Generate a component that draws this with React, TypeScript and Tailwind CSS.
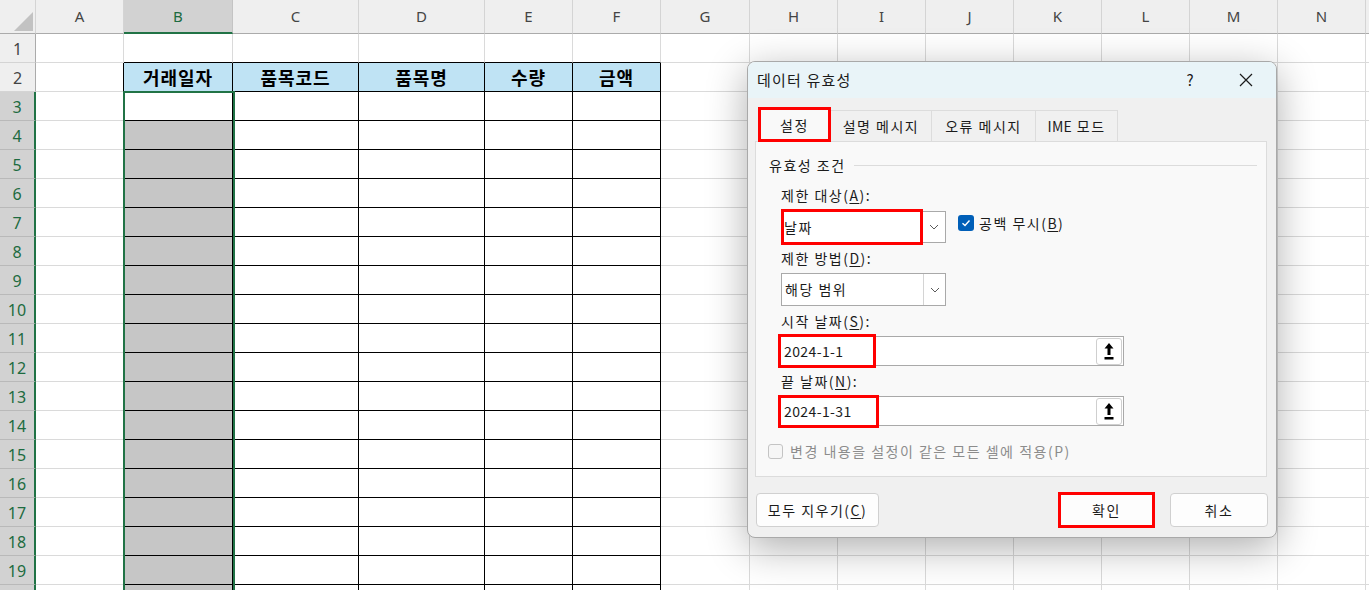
import React from 'react';

type Col = { key: string; w: string };

const COLS: Col[] = [
  { key: 'A', w: 'w-[88px]' },
  { key: 'B', w: 'w-[109px]' },
  { key: 'C', w: 'w-[126px]' },
  { key: 'D', w: 'w-[126px]' },
  { key: 'E', w: 'w-[88px]' },
  { key: 'F', w: 'w-[88px]' },
  { key: 'G', w: 'w-[89px]' },
  { key: 'H', w: 'w-[88px]' },
  { key: 'I', w: 'w-[88px]' },
  { key: 'J', w: 'w-[88px]' },
  { key: 'K', w: 'w-[88px]' },
  { key: 'L', w: 'w-[88px]' },
  { key: 'M', w: 'w-[88px]' },
  { key: 'N', w: 'w-[88px]' },
  { key: '', w: 'w-[88px]' },
];

const HEADERS: Record<number, string> = {
  1: '거래일자',
  2: '품목코드',
  3: '품목명',
  4: '수량',
  5: '금액',
};

const ROWS = Array.from({ length: 20 }, (_, i) => i + 1);

function cellClass(row: number, col: number) {
  const inTable = col >= 1 && col <= 5 && row >= 2;
  let borders = 'border-r-[#dadada] border-b-[#dadada]';
  if (inTable) borders = 'border-r-black border-b-black';
  else if (col === 0 && row >= 2) borders = 'border-r-black border-b-[#dadada]';
  else if (row === 1 && col >= 1 && col <= 5) borders = 'border-r-[#dadada] border-b-black';

  let bg = 'bg-white';
  if (inTable && row === 2) bg = 'bg-[#bfe3f4]';
  else if (col === 1 && row >= 4) bg = 'bg-[#c6c6c6]';
  return `${borders} ${bg}`;
}

function Chevron() {
  return (
    <svg width="10" height="6" viewBox="0 0 10 6" fill="none">
      <path d="M1 1 L5 5 L9 1" stroke="#5a5a5a" strokeWidth="1" />
    </svg>
  );
}

function UploadArrow() {
  return (
    <svg width="10" height="17" viewBox="0 0 10 17">
      <polygon points="5,0 9.5,5.5 6.5,5.5 6.5,12 3.5,12 3.5,5.5 0.5,5.5" fill="#000" />
      <rect x="0.5" y="14" width="9" height="2.5" fill="#000" />
    </svg>
  );
}

function Mn({ c }: { c: string }) {
  return <span className="underline underline-offset-2">{c}</span>;
}

function Sheet() {
  return (
    <div className="flex flex-col">
      {/* column headers */}
      <div className="flex h-[34px]">
        <div className="flex h-[34px] w-[36px] shrink-0 items-end justify-end border-r border-b border-r-[#d4d4d4] border-b-[#ababab] bg-[#efefef] pb-[2px] pr-[2px]">
          <svg width="19" height="19" viewBox="0 0 19 19">
            <polygon points="19,0 19,19 0,19" fill="#c2c2c2" />
          </svg>
        </div>
        {COLS.map((c, i) =>
          c.key === 'B' ? (
            <div
              key={i}
              className={`${c.w} flex h-[34px] shrink-0 items-center justify-center border-r border-b-2 border-r-[#c4c4c4] border-b-[#217346] bg-[#d2d2d2] text-[15px] text-[#1d6b40]`}
            >
              {c.key}
            </div>
          ) : (
            <div
              key={i}
              className={`${c.w} flex h-[34px] shrink-0 items-center justify-center border-r border-b border-r-[#d4d4d4] border-b-[#ababab] bg-[#efefef] text-[15px] text-[#444]`}
            >
              {c.key}
            </div>
          )
        )}
      </div>

      {ROWS.map((r) => (
        <div key={r} className="flex h-[29px]">
          {r >= 3 ? (
            <div className="flex h-[29px] w-[36px] shrink-0 items-center justify-center border-r-2 border-b border-r-[#217346] border-b-[#b9b9b9] bg-[#d2d2d2] pt-[2px] text-[16px] text-[#1d6b40]">
              {r < 20 ? r : null}
            </div>
          ) : (
            <div className="flex h-[29px] w-[36px] shrink-0 items-center justify-center border-r border-b border-r-[#ababab] border-b-[#d4d4d4] bg-[#efefef] pt-[2px] text-[16px] text-[#444]">
              {r}
            </div>
          )}
          {COLS.map((c, ci) => (
            <div
              key={ci}
              className={`${c.w} flex h-[29px] shrink-0 items-center justify-center border-r border-b ${cellClass(r, ci)}`}
            >
              {r === 2 && HEADERS[ci] ? (
                <span className="font-['Noto_Sans_CJK_KR',sans-serif] text-[18px] font-bold tracking-[1px] text-black">
                  {HEADERS[ci]}
                </span>
              ) : null}
            </div>
          ))}
        </div>
      ))}
    </div>
  );
}

function Dialog() {
  return (
    <div className="absolute left-[747px] top-[61px] h-[477px] w-[530px] overflow-hidden rounded-[8px] border border-[#a9a9a9] bg-[#f0f0f0] font-['Noto_Sans_CJK_KR',sans-serif] text-[14px] tracking-[1.5px] text-[#1b1b1b] shadow-[0_10px_40px_rgba(0,0,0,0.32)]">
      {/* title bar */}
      <div className="flex h-[36px] items-center bg-[#e9f4f8] pl-[9px]">
        <span className="text-[15px] tracking-[1.2px]">데이터 유효성</span>
        <div className="ml-auto mr-[7px] flex items-center gap-[10px]">
          <span className="w-[46px] text-center text-[15px] tracking-normal">?</span>
          <span className="flex w-[46px] justify-center">
            <svg width="14" height="14" viewBox="0 0 14 14">
              <path d="M1 1 L13 13 M13 1 L1 13" stroke="#1b1b1b" strokeWidth="1.2" />
            </svg>
          </span>
        </div>
      </div>

      {/* tabs */}
      <div className="ml-[10px] mt-[12px] flex h-[31px]">
        <div className="relative flex h-[31px] w-[73px] items-center justify-center bg-[#f9f9f9]">
          설정
          <div className="absolute inset-x-0 -top-[3px] h-[35px] border-[3px] border-[#ff0000]" />
        </div>
        <div className="flex h-[31px] w-[101px] items-center justify-center border-t border-r border-[#dcdcdc]">
          설명 메시지
        </div>
        <div className="flex h-[31px] w-[104px] items-center justify-center border-t border-r border-[#dcdcdc]">
          오류 메시지
        </div>
        <div className="flex h-[31px] w-[82px] items-center justify-center border-t border-r border-[#dcdcdc]">
          <span className="tracking-[0.3px]">IME</span>&nbsp;모드
        </div>
      </div>

      {/* panel */}
      <div className="ml-[7px] flex h-[336px] w-[512px] flex-col border border-[#dcdcdc] bg-[#f9f9f9]">
        <div className="mt-[13px] flex h-[20px] items-center pl-[13px]">
          <span>유효성 조건</span>
          <div className="ml-[8px] mr-[9px] h-px flex-1 bg-[#dcdcdc]" />
        </div>

        <div className="mt-[10px] flex h-[20px] items-center pl-[25px]">
          제한 대상(<Mn c="A" />):
        </div>
        <div className="mt-[4px] flex h-[36px] pl-[25px]">
          <div className="flex h-[36px] w-[165px] items-center">
            <div className="flex h-[36px] w-[142px] items-center border-[3px] border-[#ff0000] bg-white">
              날짜
            </div>
            <div className="flex h-[32px] w-[23px] items-center justify-center border border-l-0 border-[#a9a9a9] bg-white">
              <Chevron />
            </div>
          </div>
          <div className="ml-[12px] mt-[6px] flex h-[16px] w-[16px] items-center justify-center rounded-[3px] bg-[#005fb8]">
            <svg width="12" height="12" viewBox="0 0 12 12" fill="none">
              <path d="M2.5 6.2 L5 8.5 L9.5 3.5" stroke="#fff" strokeWidth="1.4" />
            </svg>
          </div>
          <div className="ml-[5px] mt-[4px] flex h-[20px] items-center">
            공백 무시(<Mn c="B" />)
          </div>
        </div>

        <div className="mt-[3px] flex h-[20px] items-center pl-[25px]">
          제한 방법(<Mn c="D" />):
        </div>
        <div className="mt-[5px] flex pl-[25px]">
          <div className="flex h-[33px] w-[165px] border border-[#a9a9a9] bg-white">
            <div className="flex flex-1 items-center pl-[3px]">해당 범위</div>
            <div className="flex w-[22px] items-center justify-center border-l border-[#d4d4d4]">
              <Chevron />
            </div>
          </div>
        </div>

        <div className="mt-[5px] flex h-[20px] items-center pl-[25px]">
          시작 날짜(<Mn c="S" />):
        </div>
        <div className="mt-[5px] flex pl-[22px]">
          <div className="relative flex h-[30px] w-[346px] items-center border border-[#a9a9a9] bg-white pl-[5px]">
            <span className="tracking-[0.4px]">2024-1-1</span>
            <div className="ml-auto mr-[1px] flex h-[27px] w-[26px] items-center justify-center rounded-[3px] border border-[#cfcfcf] bg-white">
              <UploadArrow />
            </div>
            <div className="absolute -left-[1px] -top-[3px] h-[34px] w-[98px] border-[3px] border-[#ff0000]" />
          </div>
        </div>

        <div className="mt-[5px] flex h-[20px] items-center pl-[25px]">
          끝 날짜(<Mn c="N" />):
        </div>
        <div className="mt-[5px] flex pl-[22px]">
          <div className="relative flex h-[30px] w-[346px] items-center border border-[#a9a9a9] bg-white pl-[5px]">
            <span className="tracking-[0.4px]">2024-1-31</span>
            <div className="ml-auto mr-[1px] flex h-[27px] w-[26px] items-center justify-center rounded-[3px] border border-[#cfcfcf] bg-white">
              <UploadArrow />
            </div>
            <div className="absolute -left-[1px] -top-[2px] h-[33px] w-[101px] border-[3px] border-[#ff0000]" />
          </div>
        </div>

        <div className="mt-[15px] flex h-[20px] items-center pl-[12px] text-[#8c8c8c]">
          <div className="h-[15px] w-[15px] rounded-[3px] border border-[#c4c4c4] bg-[#f6f6f6]" />
          <span className="ml-[7px]">변경 내용을 설정이 같은 모든 셀에 적용(P)</span>
        </div>
      </div>

      {/* buttons */}
      <div className="ml-[8px] mr-[8px] mt-[16px] flex">
        <div className="flex h-[34px] w-[123px] items-center justify-center rounded-[4px] border border-[#d0d0d0] bg-[#fdfdfd]">
          모두 지우기(<Mn c="C" />)
        </div>
        <div className="relative ml-auto flex h-[34px] w-[97px] items-center justify-center bg-[#fdfdfd]">
          확인
          <div className="absolute -inset-y-[1px] inset-x-0 border-[3px] border-[#ff0000]" />
        </div>
        <div className="ml-[15px] flex h-[34px] w-[98px] items-center justify-center rounded-[4px] border border-[#d0d0d0] bg-[#fdfdfd]">
          취소
        </div>
      </div>
    </div>
  );
}

export default function App() {
  return (
    <div className="relative h-[590px] w-[1369px] overflow-hidden bg-white font-['Noto_Sans','Noto_Sans_CJK_KR',sans-serif]">
      <Sheet />
      {/* selection outline B3:B20 */}
      <div className="pointer-events-none absolute left-[123px] top-[91px] h-[520px] w-[112px] border-2 border-[#217346]" />
      <Dialog />
    </div>
  );
}
